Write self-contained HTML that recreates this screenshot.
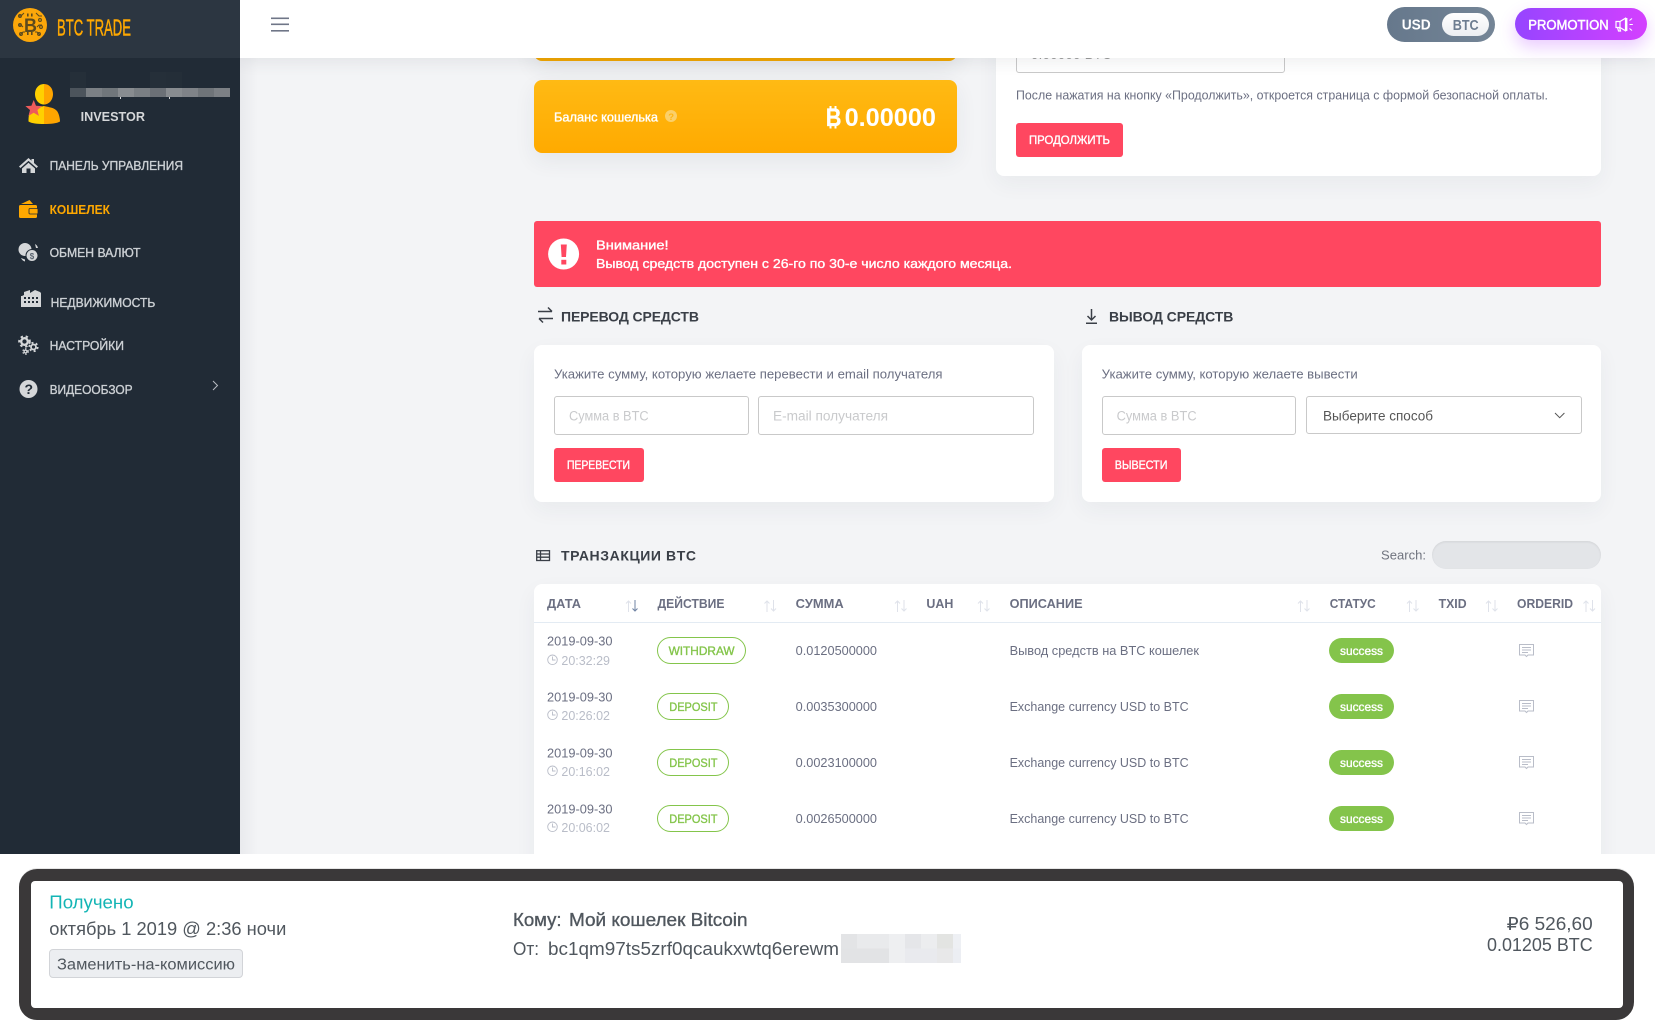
<!DOCTYPE html>
<html lang="ru"><head><meta charset="utf-8"><title>BTC Trade</title>
<style>
*{box-sizing:border-box}
html,body{margin:0;padding:0;width:1655px;height:1021px;overflow:hidden;background:#fff;font-family:"Liberation Sans","DejaVu Sans",sans-serif}
.a{position:absolute}
#main{left:240px;top:0;width:1415px;height:854px;background:#f3f4f6;overflow:hidden}
.card{position:absolute;background:#fff;border-radius:8px;box-shadow:0 8px 22px rgba(40,50,70,.05)}
.inp{position:absolute;background:#fff;border:1px solid #c9c9c9;border-radius:3px}
.btn{position:absolute;background:#ff4760;border-radius:3px}
svg{position:absolute;left:0;top:0}
text{fill:currentColor;font-family:"Liberation Sans","DejaVu Sans",sans-serif}
.m{stroke:currentColor;stroke-width:.35px}
.w{color:#fff}.g{color:#6b6f82}.l{color:#b9bdc8}.p{color:#c9cacc}.n{color:#84c54b}.h{color:#3a3f47}.s{color:#ccd0d4}.d{color:#50575e}
</style></head><body>
<div class="a" id="main">
 <div class="a" style="left:0;top:0;width:18px;height:854px;background:linear-gradient(90deg,#e9eaed,#f3f4f6)"></div>
 <div class="a" style="left:294px;top:20px;width:423px;height:41px;background:#f0a500;border-radius:8px;box-shadow:0 8px 22px rgba(40,50,70,.08)"></div>
 <div class="a" style="left:294px;top:80px;width:423px;height:73px;background:linear-gradient(180deg,#ffba14,#ffaa00);border-radius:8px;box-shadow:0 8px 22px rgba(40,50,70,.07)"></div>
 <div class="card" style="left:756px;top:20px;width:605px;height:156px"></div>
 <div class="inp" style="left:776px;top:30px;width:269px;height:43px"></div>
 <div class="a" style="left:791px;top:46px;font-size:13px;line-height:18px;color:#999;letter-spacing:.4px">0.00000 BTC</div>
 <div class="btn" style="left:776px;top:123px;width:107px;height:34px"></div>
 <div class="a" style="left:294px;top:221px;width:1067px;height:66px;background:#ff4760;border-radius:3px"></div>
 <div class="card" style="left:294px;top:345px;width:520px;height:157px"></div>
 <div class="card" style="left:842px;top:345px;width:519px;height:157px"></div>
 <div class="inp" style="left:314px;top:396px;width:195px;height:39px"></div>
 <div class="inp" style="left:518px;top:396px;width:276px;height:39px"></div>
 <div class="inp" style="left:862px;top:396px;width:194px;height:39px"></div>
 <div class="inp" style="left:1066px;top:396px;width:276px;height:38px"></div>
 <div class="btn" style="left:314px;top:448px;width:90px;height:34px"></div>
 <div class="btn" style="left:862px;top:448px;width:79px;height:34px"></div>
 <div class="a" style="left:1192px;top:541px;width:169px;height:28px;background:#e3e5e8;border-radius:14px;box-shadow:inset 0 1px 2px rgba(0,0,0,.08)"></div>
 <div class="card" style="left:294px;top:584px;width:1067px;height:290px;border-radius:8px"></div>
 <div class="a" style="left:294px;top:622px;width:1067px;height:1px;background:#e3ebf3"></div>
 <div class="a" style="left:1089px;top:638px;width:65px;height:25px;background:#84c44b;border-radius:13px"></div>
 <div class="a" style="left:1089px;top:694px;width:65px;height:25px;background:#84c44b;border-radius:13px"></div>
 <div class="a" style="left:1089px;top:750px;width:65px;height:25px;background:#84c44b;border-radius:13px"></div>
 <div class="a" style="left:1089px;top:806px;width:65px;height:25px;background:#84c44b;border-radius:13px"></div>
 <div class="a" style="left:417px;top:637px;width:89px;height:27px;border:1px solid #84c54b;border-radius:14px"></div>
 <div class="a" style="left:417px;top:693px;width:72px;height:27px;border:1px solid #84c54b;border-radius:14px"></div>
 <div class="a" style="left:417px;top:749px;width:72px;height:27px;border:1px solid #84c54b;border-radius:14px"></div>
 <div class="a" style="left:417px;top:805px;width:72px;height:27px;border:1px solid #84c54b;border-radius:14px"></div>
</div>
<div class="a" style="left:240px;top:0;width:1415px;height:58px;background:#fff;box-shadow:0 3px 16px rgba(40,50,70,.09)"></div>
<div class="a" style="left:0;top:0;width:240px;height:854px;background:#212b36"></div>
<div class="a" style="left:0;top:0;width:240px;height:58px;background:#2c3641"></div>
<div class="a" style="left:1387px;top:7px;width:108px;height:35px;background:linear-gradient(90deg,#66788c,#748596);border-radius:18px"></div>
<div class="a" style="left:1442px;top:13px;width:47px;height:23px;background:linear-gradient(180deg,#fff,#eceef1);border-radius:12px"></div>
<div class="a" style="left:1515px;top:8px;width:132px;height:32px;background:linear-gradient(90deg,#9645ff,#d440ff);border-radius:16px;box-shadow:0 7px 16px rgba(180,70,255,.28)"></div>
<div class="a" style="left:0;top:854px;width:1655px;height:167px;background:#fff"></div>
<div class="a" style="left:19px;top:869px;width:1615px;height:151px;border:12px solid #3a3839;border-radius:18px;box-shadow:0 -1px 0 #e6e6e6"></div>
<div class="a" style="left:31px;top:881px;width:1592px;height:127px;background:#fff;border-radius:4px"></div>
<div class="a" style="left:49px;top:949px;width:194px;height:29px;background:#eceef1;border:1px solid #d2d4d8;border-radius:4px"></div>

<svg width="1655" height="1021" viewBox="0 0 1655 1021">
<!-- logo -->
<circle cx="30" cy="25" r="17" fill="#fca70a"/>
<g fill="none" stroke="#5c4a1e" stroke-width="1.1">
<path d="M24 13l-3 3h-3M36 13l3 3h3M18 25h3l2 2M42 25h-3l-2 2M20 35l3-3h2M40 35l-3-3h-2"/>
<circle cx="20" cy="16" r="1.4"/><circle cx="40" cy="20" r="1.4"/><circle cx="20" cy="25" r="1.4"/><circle cx="41" cy="27" r="1.4"/><circle cx="21" cy="34" r="1.4"/><circle cx="39" cy="34" r="1.4"/>
</g>
<text x="24" y="32" font-size="19" font-weight="700" style="color:#5c4a1e" textLength="13" lengthAdjust="spacingAndGlyphs">B</text>
<rect x="27" y="13.500" width="1.600" height="3" fill="#5c4a1e"/><rect x="31" y="13.500" width="1.600" height="3" fill="#5c4a1e"/><rect x="27" y="32" width="1.600" height="3" fill="#5c4a1e"/><rect x="31" y="32" width="1.600" height="3" fill="#5c4a1e"/>
<text class="m" x="57" y="35.500" font-size="23" style="color:#ffa800;stroke-width:.5px" textLength="74" lengthAdjust="spacingAndGlyphs">BTC TRADE</text>
<!-- hidden name mosaic -->
<g>
<rect x="70" y="72" width="16" height="16" fill="#252f39"/><rect x="150" y="72" width="16" height="16" fill="#252f39"/><rect x="166" y="72" width="16" height="16" fill="#242e38"/>
<rect x="70" y="88" width="16" height="9" fill="#4c545c"/><rect x="86" y="88" width="16" height="9" fill="#7b8085"/><rect x="102" y="88" width="16" height="9" fill="#70767b"/><rect x="118" y="88" width="16" height="9" fill="#888c90"/><rect x="134" y="88" width="16" height="9" fill="#7a7f84"/><rect x="150" y="88" width="16" height="9" fill="#6b7076"/><rect x="166" y="88" width="16" height="9" fill="#888c90"/><rect x="182" y="88" width="16" height="9" fill="#7f8388"/><rect x="198" y="88" width="16" height="9" fill="#6f7479"/><rect x="214" y="88" width="16" height="9" fill="#7c8085"/>
<rect x="120" y="97" width="1" height="2" fill="#d5d7d9"/><rect x="169" y="97" width="1" height="2" fill="#d5d7d9"/>
</g>
<!-- avatar -->
<path d="M44 84c-5.500 0-9 4.500-9 10s3.500 10.500 9 10.500zM44 106c-6 1.500-10 1.500-14 6-1.500 2-1.500 8-1.500 9.500 3 2 9 2.500 15.500 2.500z" fill="#ffd000"/>
<path d="M44 84c5.500 0 9 4.500 9 10s-3.500 10.500-9 10.500zM44 106c6 1.500 10 1.500 13 5 2 2.500 3 8 3 10.500-3 2-9.500 2.500-16 2.500z" fill="#ffa500"/>
<path d="M33.700 100l2.300 5.700 6 .4-4.600 3.900 1.500 5.900-5.200-3.200-5.200 3.200 1.500-5.900-4.600-3.900 6-.4z" fill="#ee5b5b"/>
<text x="80.600" y="121" font-size="13" font-weight="700" style="color:#d5d7d9" textLength="64.400" lengthAdjust="spacingAndGlyphs">INVESTOR</text>
<!-- menu -->
<text class="s m" x="49.600" y="170" font-size="12.500" textLength="133.400" lengthAdjust="spacingAndGlyphs">ПАНЕЛЬ УПРАВЛЕНИЯ</text>
<text x="49.600" y="214" font-size="12.500" font-weight="700" style="color:#ffa800" textLength="60.400" lengthAdjust="spacingAndGlyphs">КОШЕЛЕК</text>
<text class="s m" x="49.600" y="257" font-size="12.500" textLength="91" lengthAdjust="spacingAndGlyphs">ОБМЕН ВАЛЮТ</text>
<text class="s m" x="50.600" y="307" font-size="12.500" textLength="104.700" lengthAdjust="spacingAndGlyphs">НЕДВИЖИМОСТЬ</text>
<text class="s m" x="49.600" y="350" font-size="12.500" textLength="74.400" lengthAdjust="spacingAndGlyphs">НАСТРОЙКИ</text>
<text class="s m" x="49.600" y="394" font-size="12.500" textLength="83" lengthAdjust="spacingAndGlyphs">ВИДЕООБЗОР</text>
<!-- menu icons -->
<g fill="#d5d7d9">
<path d="M28.500 158L19 166.500l1.400 1.500 8.100-7.100 8.100 7.100 1.400-1.500-4-3.500V159h-2.500v1.800z"/>
<path d="M22 168.500l6.500-5.800 6.500 5.800V173h-4.500v-4.500h-4V173H22z"/>
<circle cx="25" cy="249.500" r="6.500"/><circle cx="32" cy="255.500" r="6" stroke="#212b36" stroke-width="1"/>
<path d="M35 244a6 6 0 0 1 3 4l-2 0zM21 258a6 6 0 0 0 4 3.500l0-2z"/>
<path fill-rule="evenodd" d="M22 296l2-1v-3l6-2v3l5-3 5 2 1 1v14H21v-11zM24 297h2v2h-2zM28 297h2v2h-2zM32 297h2v2h-2zM36 297h2v2h-2zM24 301h2v2h-2zM28 301h2v2h-2zM32 301h2v2h-2zM36 301h2v2h-2z"/>
<circle cx="28.500" cy="389" r="9"/>
</g>
<text x="29.700" y="259" font-size="8" font-weight="700" style="color:#5a6470">$</text>
<text x="24.500" y="394" font-size="14" font-weight="700" style="color:#212b36">?</text>
<g fill="none" stroke="#d5d7d9">
<circle cx="24.500" cy="341.500" r="3.300" stroke-width="2.300"/><circle cx="24.500" cy="341.500" r="5.300" stroke-width="2" stroke-dasharray="2.400 2.800"/>
<circle cx="33.500" cy="347" r="2.500" stroke-width="1.800"/><circle cx="33.500" cy="347" r="4.200" stroke-width="1.800" stroke-dasharray="2 2.400"/>
<circle cx="25.500" cy="351.500" r="1.400" stroke-width="1.300"/><circle cx="25.500" cy="351.500" r="2.700" stroke-width="1.300" stroke-dasharray="1.400 1.600"/>
</g>
<path d="M213 381l4.500 4.500-4.500 4.500" fill="none" stroke="#b8bcc2" stroke-width="1"/>
<g fill="#ffa800">
<path d="M21 204l8.500-4 3.500 4z"/><rect x="19" y="205" width="18" height="13" rx="1.500"/><rect x="29" y="208.500" width="9" height="5.500" rx="1" stroke="#212b36" stroke-width=".8"/>
</g>
<!-- hamburger -->
<g fill="#6f7687"><rect x="271" y="17.500" width="18" height="1.600"/><rect x="271" y="23.500" width="18" height="1.600"/><rect x="271" y="30" width="18" height="1.600"/></g>
<!-- header -->
<text class="w" x="1401.700" y="29.500" font-size="14.500" font-weight="700" textLength="29" lengthAdjust="spacingAndGlyphs">USD</text>
<text x="1452.700" y="30" font-size="14.500" font-weight="700" style="color:#6d7d90" textLength="26" lengthAdjust="spacingAndGlyphs">BTC</text>
<text class="w m" x="1528.300" y="29.500" font-size="13.500" style="stroke-width:.5px" textLength="80.400" lengthAdjust="spacingAndGlyphs">PROMOTION</text>
<g fill="none" stroke="#fff" stroke-width="1.200">
<path d="M1616 21.500h4v6h-4zM1620 21.500l5.500-3.300v12.600l-5.500-3.300M1617.500 27.500l1 3.500h2l-1-3.500"/>
<path d="M1626.500 18v13" stroke-width="1.800"/>
<path d="M1629.500 20.500l2.500-2M1629.500 24.500h3.300M1629.500 28.500l2.500 2" stroke-width="1.100"/>
</g>
<!-- balance -->
<text class="w m" x="554" y="121.500" font-size="12.500" textLength="104" lengthAdjust="spacingAndGlyphs">Баланс кошелька</text>
<circle cx="671" cy="116" r="6" fill="#fbd06a"/>
<text x="668.200" y="119.800" font-size="9.500" font-weight="700" style="color:#ffb514">?</text>
<text class="w m" x="825.700" y="126" font-size="25" font-weight="700" textLength="15.700" lengthAdjust="spacingAndGlyphs">B</text>
<g fill="#fff"><rect x="829.500" y="106" width="2" height="3"/><rect x="834.500" y="106" width="2" height="3"/><rect x="829.500" y="125.500" width="2" height="3"/><rect x="834.500" y="125.500" width="2" height="3"/></g>
<text class="w" x="844.600" y="126" font-size="25" font-weight="700" textLength="91.400" lengthAdjust="spacingAndGlyphs">0.00000</text>
<!-- right card -->
<text class="g" x="1016" y="99.500" font-size="12.500" textLength="532" lengthAdjust="spacingAndGlyphs">После нажатия на кнопку «Продолжить», откроется страница с формой безопасной оплаты.</text>
<text class="w m" x="1029" y="144" font-size="11.500" textLength="81" lengthAdjust="spacingAndGlyphs">ПРОДОЛЖИТЬ</text>
<!-- alert -->
<circle cx="563.600" cy="254" r="15.500" fill="#fff"/>
<path d="M560.800 244.500h6l-.8 12.500h-4.400z" fill="#ff4760"/><rect x="561.300" y="259.800" width="5" height="4.700" fill="#ff4760"/>
<text class="w m" x="596" y="249.500" font-size="13" textLength="72.600" lengthAdjust="spacingAndGlyphs">Внимание!</text>
<text class="w m" x="596" y="268" font-size="13" textLength="416" lengthAdjust="spacingAndGlyphs">Вывод средств доступен с 26-го по 30-е число каждого месяца.</text>
<!-- headings -->
<g fill="none" stroke="#3a3f47" stroke-width="1.500">
<path d="M538 311.500h14M548 307.500l4 4M553 318.500h-14M543 322.500l-4-4"/>
<path d="M1091.500 309v11M1087.500 316l4 4 4-4M1086 323.300h11"/>
</g>
<g fill="none" stroke="#3a3f47" stroke-width="1.300">
<rect x="536.700" y="550.700" width="12.800" height="9.800"/><path d="M536.700 554h12.800M536.700 557.200h12.800M540.500 550.700v9.800"/>
</g>
<text class="h" x="561" y="321.700" font-size="14" font-weight="700" textLength="138" lengthAdjust="spacing">ПЕРЕВОД СРЕДСТВ</text>
<text class="h" x="1109" y="321.700" font-size="14" font-weight="700" textLength="124.400" lengthAdjust="spacing">ВЫВОД СРЕДСТВ</text>
<text class="h" x="561" y="560.700" font-size="14" font-weight="700" textLength="135" lengthAdjust="spacing">ТРАНЗАКЦИИ BTC</text>
<!-- forms -->
<text class="g" x="554" y="378.500" font-size="12.500" textLength="388.500" lengthAdjust="spacingAndGlyphs">Укажите сумму, которую желаете перевести и email получателя</text>
<text class="g" x="1101.700" y="378.500" font-size="12.500" textLength="256" lengthAdjust="spacingAndGlyphs">Укажите сумму, которую желаете вывести</text>
<text class="p" x="569" y="420.500" font-size="13.500" textLength="79.600" lengthAdjust="spacingAndGlyphs">Сумма в BTC</text>
<text class="p" x="773" y="420.500" font-size="13.500" textLength="115" lengthAdjust="spacingAndGlyphs">E-mail получателя</text>
<text class="p" x="1116.600" y="420.500" font-size="13.500" textLength="80" lengthAdjust="spacingAndGlyphs">Сумма в BTC</text>
<text x="1323" y="420.500" font-size="13.500" style="color:#555" textLength="110" lengthAdjust="spacingAndGlyphs">Выберите способ</text>
<path d="M1555 413l4.700 4.700 4.700-4.700" fill="none" stroke="#555" stroke-width="1"/>
<text class="w m" x="567" y="469" font-size="11.500" textLength="63" lengthAdjust="spacingAndGlyphs">ПЕРЕВЕСТИ</text>
<text class="w m" x="1114.800" y="469" font-size="11.500" textLength="52.600" lengthAdjust="spacingAndGlyphs">ВЫВЕСТИ</text>
<text x="1381" y="559.500" font-size="13" style="color:#70747f" textLength="45" lengthAdjust="spacingAndGlyphs">Search:</text>
<!-- table head -->
<g font-size="12.500" font-weight="700" class="g">
<text x="547" y="608" textLength="34" lengthAdjust="spacingAndGlyphs">ДАТА</text>
<text x="657.500" y="608" textLength="67" lengthAdjust="spacingAndGlyphs">ДЕЙСТВИЕ</text>
<text x="795.700" y="608" textLength="48" lengthAdjust="spacingAndGlyphs">СУММА</text>
<text x="926.400" y="608" textLength="27" lengthAdjust="spacingAndGlyphs">UAH</text>
<text x="1009.600" y="608" textLength="73" lengthAdjust="spacingAndGlyphs">ОПИСАНИЕ</text>
<text x="1329.700" y="608" textLength="46" lengthAdjust="spacingAndGlyphs">СТАТУС</text>
<text x="1438.600" y="608" textLength="28" lengthAdjust="spacingAndGlyphs">TXID</text>
<text x="1517" y="608" textLength="56" lengthAdjust="spacingAndGlyphs">ORDERID</text>
</g>
<!-- sort arrows -->
<g fill="none" stroke="#dfe2ea" stroke-width="1">
<path d="M628.500 612v-11M626 603.500l2.500-2.500 2.500 2.500"/>
<path d="M767 612v-11M764.500 603.500l2.500-2.500 2.500 2.500M773.500 600v11M771 608.500l2.500 2.500 2.500-2.500"/>
<path d="M897.500 612v-11M895 603.500l2.500-2.500 2.500 2.500M904 600v11M901.500 608.500l2.500 2.500 2.500-2.500"/>
<path d="M980.500 612v-11M978 603.500l2.500-2.500 2.500 2.500M987 600v11M984.500 608.500l2.500 2.500 2.500-2.500"/>
<path d="M1300.500 612v-11M1298 603.500l2.500-2.500 2.500 2.500M1307 600v11M1304.500 608.500l2.500 2.500 2.500-2.500"/>
<path d="M1409.500 612v-11M1407 603.500l2.500-2.500 2.500 2.500M1416 600v11M1413.500 608.500l2.500 2.500 2.500-2.500"/>
<path d="M1488.500 612v-11M1486 603.500l2.500-2.500 2.500 2.500M1495 600v11M1492.500 608.500l2.500 2.500 2.500-2.500"/>
<path d="M1586 612v-11M1583.500 603.500l2.500-2.500 2.500 2.500M1592.500 600v11M1590 608.500l2.500 2.500 2.500-2.500"/>
</g>
<path d="M635 600v11M632.500 608.500l2.500 2.500 2.500-2.500" fill="none" stroke="#6f83a3" stroke-width="1"/>
<!-- rows -->
<g class="g" font-size="12.500">
<text x="547" y="645.500" textLength="65.500" lengthAdjust="spacingAndGlyphs">2019-09-30</text>
<text x="547" y="701.500" textLength="65.500" lengthAdjust="spacingAndGlyphs">2019-09-30</text>
<text x="547" y="757.500" textLength="65.500" lengthAdjust="spacingAndGlyphs">2019-09-30</text>
<text x="547" y="813.500" textLength="65.500" lengthAdjust="spacingAndGlyphs">2019-09-30</text>
<text x="795.700" y="655" textLength="81.300" lengthAdjust="spacingAndGlyphs">0.0120500000</text>
<text x="795.700" y="710.800" textLength="81.300" lengthAdjust="spacingAndGlyphs">0.0035300000</text>
<text x="795.700" y="766.800" textLength="81.300" lengthAdjust="spacingAndGlyphs">0.0023100000</text>
<text x="795.700" y="822.800" textLength="81.300" lengthAdjust="spacingAndGlyphs">0.0026500000</text>
<text x="1009.600" y="655" textLength="189.400" lengthAdjust="spacingAndGlyphs">Вывод средств на BTC кошелек</text>
<text x="1009.600" y="710.800" textLength="179" lengthAdjust="spacingAndGlyphs">Exchange currency USD to BTC</text>
<text x="1009.600" y="766.800" textLength="179" lengthAdjust="spacingAndGlyphs">Exchange currency USD to BTC</text>
<text x="1009.600" y="822.800" textLength="179" lengthAdjust="spacingAndGlyphs">Exchange currency USD to BTC</text>
</g>
<g class="l" font-size="12.500">
<text x="561.400" y="664.800" textLength="48.600" lengthAdjust="spacingAndGlyphs">20:32:29</text>
<text x="561.400" y="719.800" textLength="48.600" lengthAdjust="spacingAndGlyphs">20:26:02</text>
<text x="561.400" y="775.800" textLength="48.600" lengthAdjust="spacingAndGlyphs">20:16:02</text>
<text x="561.400" y="831.800" textLength="48.600" lengthAdjust="spacingAndGlyphs">20:06:02</text>
</g>
<g fill="none" stroke="#b9bdc8" stroke-width=".9">
<circle cx="552.500" cy="659.800" r="4.800"/><path d="M552.500 656.500v3.500h3"/>
<circle cx="552.500" cy="714.800" r="4.800"/><path d="M552.500 711.500v3.500h3"/>
<circle cx="552.500" cy="770.800" r="4.800"/><path d="M552.500 767.500v3.500h3"/>
<circle cx="552.500" cy="826.800" r="4.800"/><path d="M552.500 823.500v3.500h3"/>
</g>
<g class="n" font-size="12">
<text class="m" x="668.600" y="655" textLength="66" lengthAdjust="spacingAndGlyphs">WITHDRAW</text>
<text class="m" x="669.300" y="710.800" textLength="48.200" lengthAdjust="spacingAndGlyphs">DEPOSIT</text>
<text class="m" x="669.300" y="766.800" textLength="48.200" lengthAdjust="spacingAndGlyphs">DEPOSIT</text>
<text class="m" x="669.300" y="822.800" textLength="48.200" lengthAdjust="spacingAndGlyphs">DEPOSIT</text>
</g>
<g class="w" font-size="11.500">
<text class="m" x="1340" y="655" textLength="43" lengthAdjust="spacingAndGlyphs">success</text>
<text class="m" x="1340" y="711" textLength="43" lengthAdjust="spacingAndGlyphs">success</text>
<text class="m" x="1340" y="767" textLength="43" lengthAdjust="spacingAndGlyphs">success</text>
<text class="m" x="1340" y="823" textLength="43" lengthAdjust="spacingAndGlyphs">success</text>
</g>
<g fill="none" stroke="#b9bdc8" stroke-width="1">
<path d="M1519.500 644.500h14v10.500h-5.500l-1.500 1.500-1.500-1.500h-5.500zM1522 647.500h9M1522 650h9M1522 652.500h6"/>
<path d="M1519.500 700.500h14v10.500h-5.500l-1.500 1.500-1.500-1.500h-5.500zM1522 703.500h9M1522 706h9M1522 708.500h6"/>
<path d="M1519.500 756.500h14v10.500h-5.500l-1.500 1.500-1.500-1.500h-5.500zM1522 759.500h9M1522 762h9M1522 764.500h6"/>
<path d="M1519.500 812.500h14v10.500h-5.500l-1.500 1.500-1.500-1.500h-5.500zM1522 815.500h9M1522 818h9M1522 820.500h6"/>
</g>
<!-- bottom panel -->
<text x="49.300" y="908.300" font-size="18" style="color:#13b5b5" textLength="84.300" lengthAdjust="spacingAndGlyphs">Получено</text>
<text class="d" x="49.300" y="935" font-size="18" textLength="237" lengthAdjust="spacingAndGlyphs">октябрь 1 2019 @ 2:36 ночи</text>
<text class="d" x="57" y="969.300" font-size="15.500" textLength="178" lengthAdjust="spacingAndGlyphs">Заменить-на-комиссию</text>
<text class="d m" x="513" y="926" font-size="18" textLength="48.600" lengthAdjust="spacingAndGlyphs">Кому:</text>
<text class="d m" x="569" y="926" font-size="18" textLength="178.500" lengthAdjust="spacingAndGlyphs">Мой кошелек Bitcoin</text>
<text class="d" x="513" y="955" font-size="18" textLength="26" lengthAdjust="spacingAndGlyphs">От:</text>
<text class="d" x="548" y="955" font-size="18" textLength="291" lengthAdjust="spacingAndGlyphs">bc1qm97ts5zrf0qcaukxwtq6erewm</text>
<g>
<rect x="841" y="934" width="120" height="29" fill="#e7e8ea"/>
<rect x="841" y="934" width="16" height="14.500" fill="#e3e4e6"/><rect x="857" y="934" width="32" height="14.500" fill="#e9eaec"/><rect x="889" y="934" width="16" height="14.500" fill="#eeeff1"/><rect x="905" y="934" width="16" height="14.500" fill="#e5e6e9"/><rect x="921" y="934" width="16" height="14.500" fill="#ecedef"/><rect x="937" y="934" width="16" height="14.500" fill="#e3e4e2"/><rect x="953" y="934" width="8" height="14.500" fill="#eef0f4"/>
<rect x="841" y="948.500" width="48" height="14.500" fill="#e2e3e5"/><rect x="889" y="948.500" width="16" height="14.500" fill="#eeeff1"/><rect x="905" y="948.500" width="32" height="14.500" fill="#e9eaee"/><rect x="937" y="948.500" width="16" height="14.500" fill="#e8e8e9"/><rect x="953" y="948.500" width="8" height="14.500" fill="#eceef3"/>
</g>
<text class="d" x="1506.700" y="930" font-size="18" textLength="86" lengthAdjust="spacingAndGlyphs">₽6 526,60</text>
<text class="d" x="1487" y="951" font-size="18" textLength="105.700" lengthAdjust="spacingAndGlyphs">0.01205 BTC</text>
</svg>
</body></html>
